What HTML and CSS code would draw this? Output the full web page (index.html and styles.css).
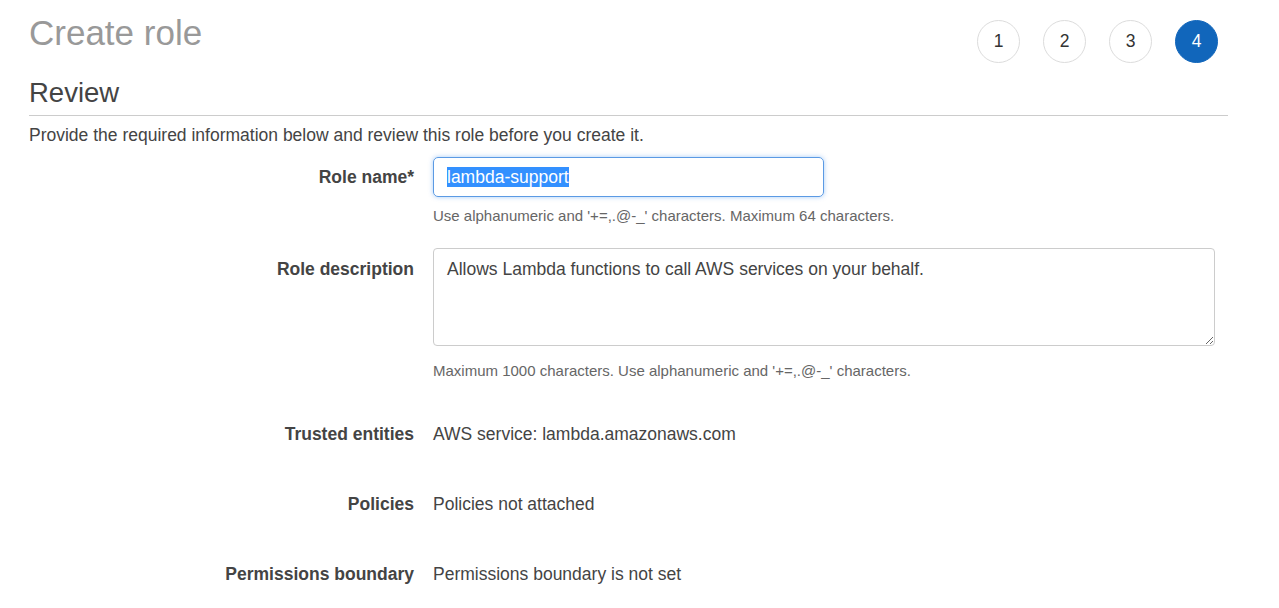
FILE: index.html
```html
<!DOCTYPE html>
<html lang="en">
<head>
<meta charset="utf-8">
<title>Create role</title>
<link rel="stylesheet" href="styles.css">
</head>
<body>
<div class="page">
  <header class="header">
    <h1 class="title">Create role</h1>
    <ol class="steps">
      <li class="step">1</li>
      <li class="step">2</li>
      <li class="step">3</li>
      <li class="step active">4</li>
    </ol>
  </header>
  <h2 class="section">Review</h2>
  <p class="intro">Provide the required information below and review this role before you create it.</p>

  <div class="form">
    <div class="row row-name">
      <div class="label label-input">Role name*</div>
      <div class="value">
        <div class="input"><span class="sel">lambda-support</span></div>
        <div class="help">Use alphanumeric and '+=,.@-_' characters. Maximum 64 characters.</div>
      </div>
    </div>

    <div class="row row-desc">
      <div class="label label-area">Role description</div>
      <div class="value">
        <textarea class="area">Allows Lambda functions to call AWS services on your behalf.</textarea>
        <div class="help help-area">Maximum 1000 characters. Use alphanumeric and '+=,.@-_' characters.</div>
      </div>
    </div>

    <div class="row row-trusted">
      <div class="label">Trusted entities</div>
      <div class="value text">AWS service: lambda.amazonaws.com</div>
    </div>

    <div class="row row-policies">
      <div class="label">Policies</div>
      <div class="value text">Policies not attached</div>
    </div>

    <div class="row row-boundary">
      <div class="label">Permissions boundary</div>
      <div class="value text">Permissions boundary is not set</div>
    </div>
  </div>
</div>
</body>
</html>
```

FILE: styles.css
```css
* { box-sizing: border-box; }

html, body {
  margin: 0;
  padding: 0;
  background: #fff;
}

body {
  font-family: "Liberation Sans", Arial, sans-serif;
  font-size: 17.5px;
  color: #444;
}

.page {
  margin-left: 29px;
  width: 1199px;
}

.header {
  display: flex;
  justify-content: space-between;
  align-items: flex-start;
  padding-top: 13px;
}

.title {
  margin: 0;
  font-size: 35px;
  line-height: 40px;
  font-weight: normal;
  color: #999;
}

.steps {
  list-style: none;
  margin: 7px 10px 0 0;
  padding: 0;
  display: flex;
  gap: 23px;
}

.step {
  width: 43px;
  height: 43px;
  border: 1px solid #dcdcdc;
  border-radius: 50%;
  display: flex;
  align-items: center;
  justify-content: center;
  font-size: 17.5px;
  color: #333;
  background: #fff;
}

.step.active {
  background: #1166bb;
  border-color: #1166bb;
  color: #fff;
}

.section {
  margin: 14px 0 0 0;
  padding-bottom: 6px;
  font-size: 27.5px;
  line-height: 32px;
  font-weight: normal;
  color: #444;
  border-bottom: 1px solid #ccc;
}

.intro {
  margin: 9px 0 0 0;
  line-height: 20px;
  color: #444;
}

.form {
  display: flex;
  flex-direction: column;
}

.row {
  display: grid;
  grid-template-columns: 385px 1fr;
  column-gap: 19px;
  align-items: start;
}

.row-name { margin-top: 12px; }
.row-desc { margin-top: 23px; }
.row-trusted { margin-top: 44px; }
.row-policies { margin-top: 50px; }
.row-boundary { margin-top: 50px; }

.label {
  text-align: right;
  font-weight: bold;
  line-height: 20px;
  color: #444;
}

.label-input {
  line-height: 40px;
}

.label-area {
  padding-top: 11px;
}

.text {
  line-height: 20px;
  color: #444;
}

.input {
  width: 391px;
  height: 40px;
  border: 1px solid #5b9ae4;
  border-radius: 5px;
  box-shadow: 0 0 5px rgba(0, 110, 230, 0.35);
  padding: 0 12px 0 13px;
  display: flex;
  align-items: center;
  line-height: 20px;
}

.sel {
  background: #3390ff;
  color: #fff;
}

.help {
  margin-top: 10px;
  font-size: 15px;
  line-height: 18px;
  color: #666;
}

.help-area {
  margin-top: 16px;
}

.area {
  display: block;
  width: 782px;
  height: 98px;
  margin: 0;
  border: 1px solid #ccc;
  border-radius: 4px;
  padding: 10px 13px;
  font-family: "Liberation Sans", Arial, sans-serif;
  font-size: 17.5px;
  line-height: 20px;
  color: #444;
  resize: vertical;
  outline: none;
}
```
